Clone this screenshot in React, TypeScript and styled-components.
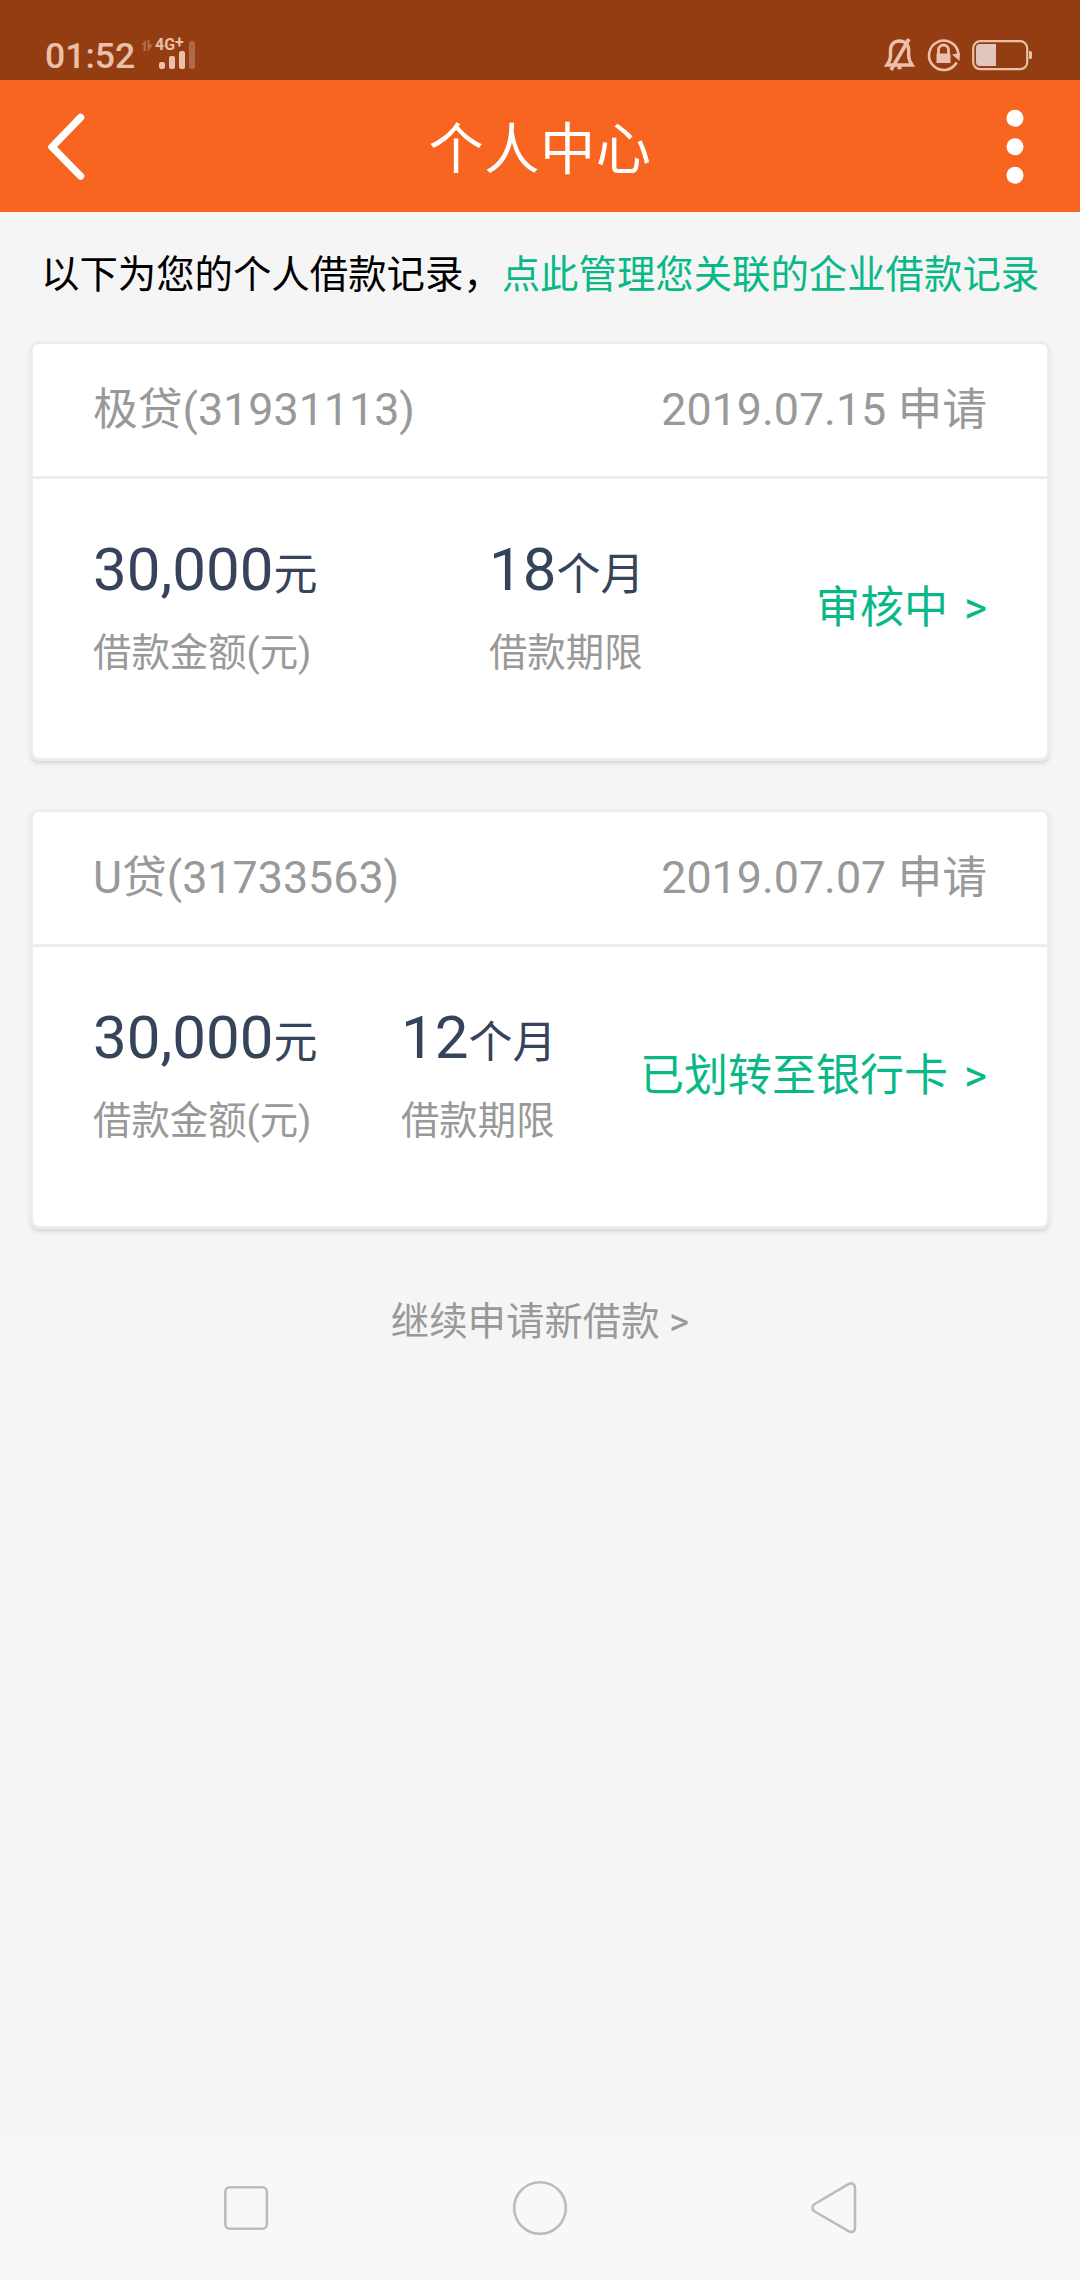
import React from "react";
import styled, { createGlobalStyle } from "styled-components";

const GlobalStyle = createGlobalStyle`
  * { box-sizing: border-box; }
  body {
    margin: 0;
    background: #f5f5f5;
    font-family: Roboto, "Noto Sans CJK SC", sans-serif;
  }
`;

const Screen = styled.div`
  width: 1080px;
  height: 2280px;
  display: flex;
  flex-direction: column;
  background: #f5f5f5;
`;

const StatusBar = styled.div`
  height: 80px;
  padding: 31px 46px 0 45px;
  display: flex;
  justify-content: space-between;
  align-items: flex-start;
  background: #943d12;
  color: #ebc0aa;
`;

const StatusGroup = styled.div<{ $gap: number; $drop?: number }>`
  display: flex;
  align-items: flex-start;
  gap: ${(p) => p.$gap}px;
  padding-top: ${(p) => p.$drop ?? 0}px;
`;

const Clock = styled.span`
  width: 90px;
  font-size: 35.6px;
  line-height: 51px;
  font-weight: 500;
`;

const NetworkStack = styled.div`
  position: relative;
  width: 60px;
  height: 44px;
`;

const NetworkLabel = styled.span`
  position: absolute;
  left: 20px;
  top: 6px;
  font-size: 16px;
  line-height: 16px;
  font-weight: 700;
`;

const RaisedPlus = styled.span`
  position: relative;
  top: -2px;
`;

const Header = styled.header`
  height: 132px;
  padding: 0 51px 0 44px;
  display: grid;
  grid-template-columns: 60px 1fr 53px;
  align-items: center;
  background: #f76520;
  color: #fff;
`;

const Title = styled.h1`
  margin: 0;
  padding-top: 7px;
  font-size: 55.2px;
  letter-spacing: 0.6px;
  line-height: 80px;
  font-weight: 400;
  text-align: center;
`;

const IconButton = styled.button<{ $end?: boolean }>`
  border: 0;
  padding: 0;
  background: none;
  display: flex;
  justify-content: ${(p) => (p.$end ? "flex-end" : "flex-start")};
`;

const Content = styled.main`
  flex: 1;
  display: flex;
  flex-direction: column;
`;

const Notice = styled.p`
  margin: 0;
  height: 132px;
  padding: 33px 0 0 41px;
  font-size: 38.4px;
  line-height: 60px;
  color: #000;
  white-space: nowrap;
`;

const NoticeLink = styled.a`
  color: #08b987;
`;

const CardList = styled.div`
  display: flex;
  flex-direction: column;
  gap: 54px;
  padding: 0 33px;
`;

const Card = styled.section`
  height: 414px;
  border-radius: 6px;
  background: #fff;
  box-shadow: 0 0 0 3px #ededed, 0 3px 5px 2px rgba(0, 0, 0, 0.15);
`;

const CardHead = styled.div`
  height: 135px;
  padding: 0 60px;
  display: flex;
  justify-content: space-between;
  align-items: center;
  border-bottom: 3px solid #ededed;
  font-size: 44.8px;
  line-height: 60px;
  color: #999;
`;

const CardBody = styled.div`
  padding: 51px 60px 0;
  display: flex;
  justify-content: space-between;
`;

const Figure = styled.div`
  display: flex;
  flex-direction: column;
`;

const Amount = styled.div`
  font-size: 60px;
  line-height: 80px;
  height: 80px;
  color: #35435b;
`;

const Unit = styled.span`
  font-size: 44px;
`;

const Caption = styled.div`
  margin-top: 13px;
  font-size: 38.4px;
  line-height: 60px;
  color: #999;
`;

const LoanStatus = styled.a`
  margin-top: 46px;
  display: flex;
  gap: 16px;
  font-size: 44px;
  line-height: 64px;
  color: #08b987;
`;

const MoreLink = styled.a`
  margin-top: 66px;
  text-align: center;
  font-size: 38.4px;
  line-height: 60px;
  color: #999;
`;

const NavBar = styled.nav`
  height: 144px;
  display: flex;
  align-items: center;
  justify-content: space-between;
  padding: 0 216px;
  background: #f8f8f8;
`;

const NavButton = styled.button`
  border: 0;
  padding: 0;
  background: none;
  display: flex;
`;

const SignalIcon = () => (
  <svg width="60" height="44" viewBox="0 0 60 44" fill="#ebc0aa">
    <g fill="#b06a47">
      <path d="M6 13.500 11 9v11H8.500v-6.500zM12.500 9h2v4.500H18L13.500 20h-1z" />
      <rect x="54" y="10" width="6" height="28" rx="2.500" />
    </g>
    <rect x="24" y="31" width="6" height="7" rx="2" />
    <rect x="34" y="25" width="6" height="13" rx="2" />
    <rect x="44" y="20" width="6" height="18" rx="2" />
  </svg>
);

const BellOffIcon = () => (
  <svg width="32" height="36" viewBox="0 0 32 36" fill="none" stroke="#ebc0aa" strokeWidth="3.400">
    <path d="M3 29h25c-2-3-3.300-5-3.300-9v-5.500c0-6-3.700-9.500-9.200-9.500S6.500 8.500 6.500 14.500V20c0 4-1.500 6-3.500 9z" />
    <path d="M25 3 7 34" strokeWidth="3.600" />
    <path d="M13.500 31.500h4" strokeWidth="3.500" />
  </svg>
);

const RotationLockIcon = () => (
  <svg width="34" height="36" viewBox="0 0 34 36" fill="none" stroke="#ebc0aa">
    <path d="M29.600 26.500A14.700 14.700 0 1 1 31.400 18" strokeWidth="2.600" />
    <path d="m25 18.500 8-1.500-.5 8z" fill="#ebc0aa" stroke="none" />
    <path d="M11.500 18v-4a5 5 0 0 1 10 0v4" strokeWidth="2.800" />
    <rect x="9.500" y="17.500" width="14" height="9.500" fill="#ebc0aa" stroke="none" />
  </svg>
);

const BatteryIcon = () => (
  <svg width="62" height="36" viewBox="0 0 62 36" fill="#ebc0aa">
    <rect x="1.200" y="5.200" width="54" height="28" rx="7" fill="none" stroke="#ebc0aa" strokeWidth="2.200" />
    <path d="M8 8h16v22H8a4 4 0 0 1-4-4V12a4 4 0 0 1 4-4z" fill="#e0c6bc" />
    <path d="M57 15h1.500a1.500 1.500 0 0 1 1.500 1.500v5a1.500 1.500 0 0 1-1.500 1.500H57z" />
  </svg>
);

const loans = [
  { name: "极贷(31931113)", date: "2019.07.15 申请", amount: "30,000", term: "18", status: "审核中" },
  { name: "U贷(31733563)", date: "2019.07.07 申请", amount: "30,000", term: "12", status: "已划转至银行卡" },
];

export default function App() {
  return (
    <>
      <GlobalStyle />
      <Screen>
        <StatusBar>
          <StatusGroup $gap={0}>
            <Clock>01:52</Clock>
            <NetworkStack>
              <SignalIcon />
              <NetworkLabel>
                4G<RaisedPlus>+</RaisedPlus>
              </NetworkLabel>
            </NetworkStack>
          </StatusGroup>
          <StatusGroup $gap={11} $drop={5}>
            <BellOffIcon />
            <RotationLockIcon />
            <BatteryIcon />
          </StatusGroup>
        </StatusBar>
        <Header>
          <IconButton aria-label="返回">
            <svg width="44" height="72" viewBox="0 0 44 72" fill="none" stroke="#fff" strokeWidth="7.400" strokeLinecap="round">
              <path d="M36.500 7.500 8 37 36.500 66" strokeLinejoin="round" />
            </svg>
          </IconButton>
          <Title>个人中心</Title>
          <IconButton $end aria-label="更多">
            <svg width="28" height="80" viewBox="0 0 28 80" fill="#fff">
              <circle cx="14" cy="12.200" r="8.500" />
              <circle cx="14" cy="40.700" r="8.500" />
              <circle cx="14" cy="69.200" r="8.500" />
            </svg>
          </IconButton>
        </Header>
        <Content>
          <Notice>
            以下为您的个人借款记录，<NoticeLink>点此管理您关联的企业借款记录</NoticeLink>
          </Notice>
          <CardList>
            {loans.map((loan) => (
              <Card key={loan.name}>
                <CardHead>
                  <span>{loan.name}</span>
                  <span>{loan.date}</span>
                </CardHead>
                <CardBody>
                  <Figure>
                    <Amount>
                      {loan.amount}
                      <Unit>元</Unit>
                    </Amount>
                    <Caption>借款金额(元)</Caption>
                  </Figure>
                  <Figure>
                    <Amount>
                      {loan.term}
                      <Unit>个月</Unit>
                    </Amount>
                    <Caption>借款期限</Caption>
                  </Figure>
                  <LoanStatus>
                    <span>{loan.status}</span>
                    <span>&gt;</span>
                  </LoanStatus>
                </CardBody>
              </Card>
            ))}
          </CardList>
          <MoreLink>继续申请新借款 &gt;</MoreLink>
        </Content>
        <NavBar>
          <NavButton aria-label="最近任务">
            <svg width="60" height="60" viewBox="0 0 60 60" fill="none" stroke="#bcbcbc" strokeWidth="2.600">
              <rect x="9.300" y="9.300" width="41.600" height="41.400" rx="4.500" />
            </svg>
          </NavButton>
          <NavButton aria-label="主屏幕">
            <svg width="60" height="60" viewBox="0 0 60 60" fill="none" stroke="#bcbcbc" strokeWidth="2.600">
              <circle cx="30" cy="30" r="25.800" />
            </svg>
          </NavButton>
          <NavButton aria-label="返回">
            <svg width="60" height="60" viewBox="0 0 60 60" fill="none" stroke="#bcbcbc" strokeWidth="2.600">
              <path d="M10.700 26 44.500 6.200c3.500-2 6.500-.2 6.500 3.500v40c0 3.700-3 5.600-6.500 3.500L10.700 33.500c-3-1.800-3-5.700 0-7.500z" />
            </svg>
          </NavButton>
        </NavBar>
      </Screen>
    </>
  );
}
